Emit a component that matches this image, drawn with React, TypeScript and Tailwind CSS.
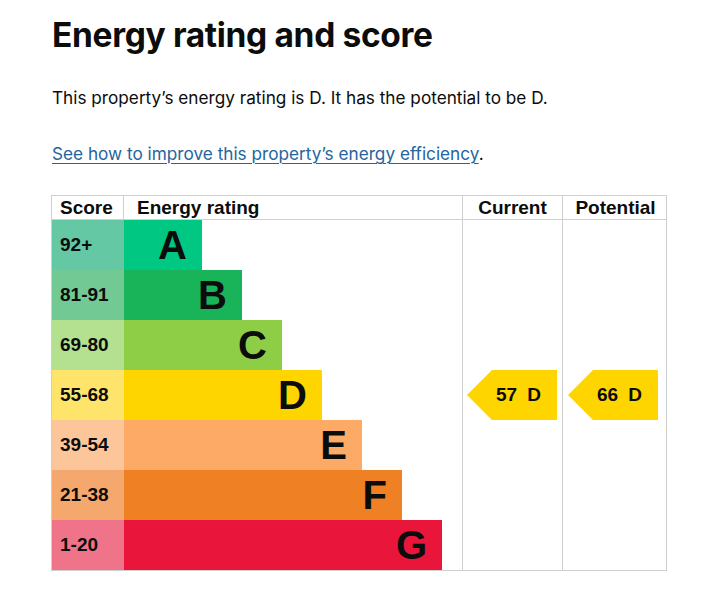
import React from "react";

const bands = [
  { score: "92+", letter: "A", light: "bg-[#65c8a5]", dark: "bg-[#00c781]", width: "w-[78px]" },
  { score: "81-91", letter: "B", light: "bg-[#72c994]", dark: "bg-[#19b459]", width: "w-[118px]" },
  { score: "69-80", letter: "C", light: "bg-[#b4e190]", dark: "bg-[#8dce46]", width: "w-[158px]" },
  { score: "55-68", letter: "D", light: "bg-[#ffe46b]", dark: "bg-[#ffd500]", width: "w-[198px]" },
  { score: "39-54", letter: "E", light: "bg-[#fdc69a]", dark: "bg-[#fcaa65]", width: "w-[238px]" },
  { score: "21-38", letter: "F", light: "bg-[#f4a86d]", dark: "bg-[#ef8023]", width: "w-[278px]" },
  { score: "1-20", letter: "G", light: "bg-[#f07489]", dark: "bg-[#e9153b]", width: "w-[318px]" },
];

const Arrow = ({ score, letter, offset }: { score: number; letter: string; offset: string }) => (
  <div
    className={`${offset} h-[50px] w-[90px] bg-[#ffd500] [clip-path:polygon(25px_0,100%_0,100%_100%,25px_100%,0_50%)] flex items-center pl-[29px] gap-[10px] text-[19px] font-bold text-[#0b0c0c]`}
  >
    <span>{score}</span>
    <span>{letter}</span>
  </div>
);

const RatingColumn = ({ score, letter, offset }: { score: number; letter: string; offset: string }) => (
  <div className="border-l border-[#cfcfcf] flex flex-col">
    {bands.map((band) => (
      <div key={band.letter} className="h-[50px]">
        {band.letter === letter && <Arrow score={score} letter={letter} offset={offset} />}
      </div>
    ))}
  </div>
);

export default function App() {
  return (
    <div className="min-h-screen bg-white pl-[52px] pt-[15px] text-[#0b0c0c] font-['Inter',sans-serif]">
      <h1 className="text-[33.5px] leading-[40px] font-bold tracking-[-0.01em]">Energy rating and score</h1>

      <p className="mt-[30px] text-[17.2px] leading-[25px]">
        This property’s energy rating is D. It has the potential to be D.
      </p>

      <p className="mt-[31px] text-[17.2px] leading-[25px]">
        <a href="#" className="text-[#26649e] underline underline-offset-[3px] decoration-1">
          See how to improve this property’s energy efficiency
        </a>
        .
      </p>

      <div className="mt-[29px] -ml-px w-[616px] border border-[#cfcfcf] font-['Liberation_Sans',Arial,sans-serif] text-[#0b0c0c]">
        <div className="grid grid-cols-[72px_338px_100px_104px] h-[24px] border-b border-[#cfcfcf] text-[19px] font-bold leading-[23px]">
          <div className="pl-[8px] border-r border-[#cfcfcf]">Score</div>
          <div className="pl-[13px]">Energy rating</div>
          <div className="border-l border-[#cfcfcf] text-center">Current</div>
          <div className="border-l border-[#cfcfcf] text-center pl-[2px]">Potential</div>
        </div>

        <div className="grid grid-cols-[410px_100px_104px]">
          <div className="flex flex-col">
            {bands.map((band) => (
              <div key={band.letter} className="flex h-[50px]">
                <div className={`${band.light} w-[72px] pl-[8px] flex items-center text-[19px] font-bold`}>
                  {band.score}
                </div>
                <div
                  className={`${band.dark} ${band.width} flex items-center justify-end pr-[15px] text-[40px] font-bold leading-none`}
                >
                  {band.letter}
                </div>
              </div>
            ))}
          </div>
          <RatingColumn score={57} letter="D" offset="ml-[4px]" />
          <RatingColumn score={66} letter="D" offset="ml-[5px]" />
        </div>
      </div>
    </div>
  );
}
